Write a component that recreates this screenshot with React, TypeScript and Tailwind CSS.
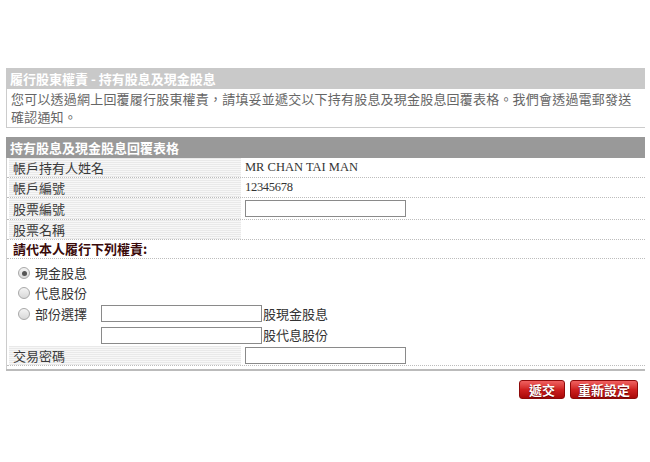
const cjk = "font-['Noto_Sans_CJK_TC','Noto_Sans',sans-serif]";
const serif = "font-['Liberation_Serif','Noto_Sans_CJK_TC',serif]";
const stripes =
  'bg-[repeating-linear-gradient(to_bottom,#e9e9e9_0px,#e9e9e9_1px,#f7f7f7_1px,#f7f7f7_2px)]';

function Row({ label, children, h = 'h-[20px]' }: { label: string; children?: React.ReactNode; h?: string }) {
  return (
    <div className={`flex ${h} border-b border-dotted border-[#bdbdbd]`}>
      <div className={`w-[232px] ml-[2px] ${stripes} flex items-center pl-[4px] text-[13px] text-[#3a3a3a]`}>
        {label}
      </div>
      <div className="flex-1 flex items-center pl-[4px]">{children}</div>
    </div>
  );
}

function Radio({ checked }: { checked?: boolean }) {
  return (
    <span className="w-[12px] h-[12px] rounded-full border border-[#a8a8a8] bg-gradient-to-b from-[#f4f4f4] to-[#d8d8d8] flex items-center justify-center">
      {checked && <span className="w-[5px] h-[5px] rounded-full bg-[#555]" />}
    </span>
  );
}

function TextBox({ w = 'w-[161px]' }: { w?: string }) {
  return <div className={`${w} h-[17px] border border-[#8a8a8a] bg-white`} />;
}

export default function App() {
  return (
    <div className={`w-[650px] h-[462px] bg-white ${cjk} pt-[68px]`}>
      <div className="ml-[6px] w-[639px]">
        {/* intro */}
        <div className="h-[21px] bg-[#c9c9c9] text-white font-bold text-[13px] leading-[21px] pl-[4px]">
          履行股東權責 - 持有股息及現金股息
        </div>
        <div className="border-l border-b border-[#cccccc] px-[4px] pt-[1px] text-[13px] text-[#666] tracking-[0.2px]">
          <div className="h-[18px] leading-[18px]">
            您可以透過網上回覆履行股東權責，請填妥並遞交以下持有股息及現金股息回覆表格。我們會透過電郵發送
          </div>
          <div className="h-[19px] leading-[18px]">確認通知。</div>
        </div>

        {/* form */}
        <div className="mt-[9px] h-[21px] bg-[#999999] text-white font-bold text-[13px] leading-[21px] pl-[4px]">
          持有股息及現金股息回覆表格
        </div>
        <div className="border-l border-[#cccccc]">
          <Row label="帳戶持有人姓名" h="h-[20px]">
            <span className={`${serif} text-[12.5px] text-[#333]`}>MR CHAN TAI MAN</span>
          </Row>
          <Row label="帳戶編號" h="h-[20px]">
            <span className={`${serif} text-[12.5px] text-[#333] tracking-[-0.3px]`}>12345678</span>
          </Row>
          <Row label="股票編號" h="h-[22px]">
            <TextBox w="w-[161px]" />
          </Row>
          <Row label="股票名稱" h="h-[20px]" />
          <div className="h-[19px] border-b border-dotted border-[#bdbdbd] flex items-center pl-[6px] text-[13px] font-bold text-[#3a0a0a]">
            請代本人履行下列權責:
          </div>

          <div className="pl-[11px] pt-[4px] text-[13px] text-[#333]">
            <div className="h-[20px] flex items-center gap-[5px]">
              <Radio checked />
              <span>現金股息</span>
            </div>
            <div className="h-[20px] flex items-center gap-[5px]">
              <Radio />
              <span>代息股份</span>
            </div>
            <div className="h-[21px] flex items-center">
              <div className="w-[83px] flex items-center gap-[5px]">
                <Radio />
                <span>部份選擇</span>
              </div>
              <TextBox w="w-[161px]" />
              <span className="ml-[1px]">股現金股息</span>
            </div>
            <div className="h-[22px] flex items-center">
              <div className="w-[83px]" />
              <TextBox w="w-[161px]" />
              <span className="ml-[1px]">股代息股份</span>
            </div>
          </div>

          <Row label="交易密碼" h="h-[20px]">
            <TextBox w="w-[161px]" />
          </Row>
          <div className="h-[3px]" />
        </div>
        <div className="h-[2px] bg-[#bbbbbb]" />

        <div className="mt-[9px] flex justify-end gap-[5px] pr-[7px]">
          <button
            type="button"
            className="h-[19px] px-[9px] rounded-[3px] border border-[#8e0a0a] bg-gradient-to-b from-[#f06060] via-[#d02020] to-[#a80808] text-white font-bold text-[13px] leading-[17px] [text-shadow:0_1px_1px_#600]"
          >
            遞交
          </button>
          <button
            type="button"
            className="h-[19px] px-[7px] rounded-[3px] border border-[#8e0a0a] bg-gradient-to-b from-[#f06060] via-[#d02020] to-[#a80808] text-white font-bold text-[13px] leading-[17px] [text-shadow:0_1px_1px_#600]"
          >
            重新設定
          </button>
        </div>
      </div>
    </div>
  );
}
